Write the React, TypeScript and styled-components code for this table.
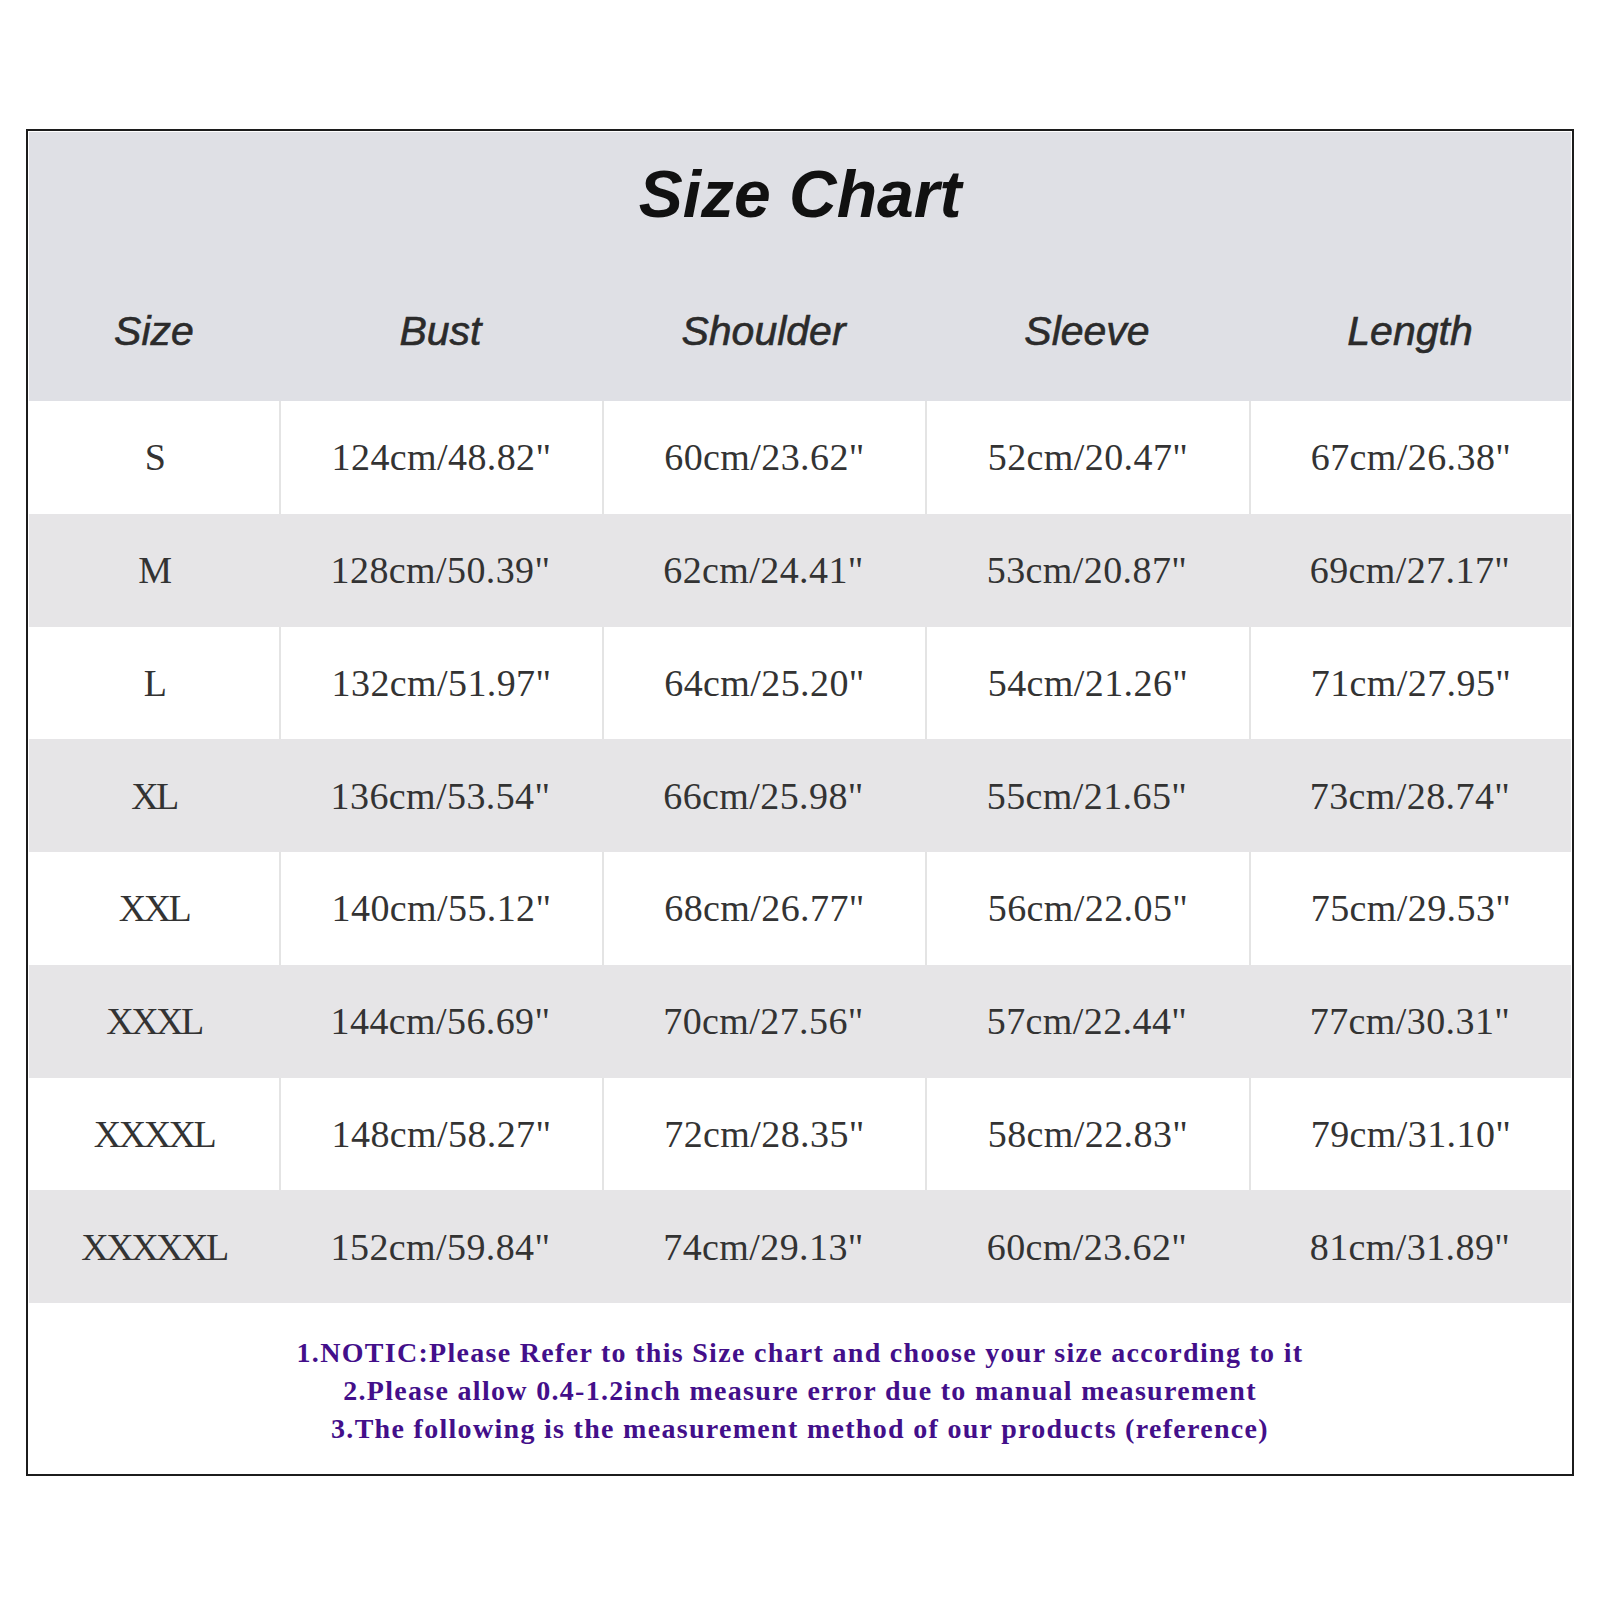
import React from "react";
import styled, { createGlobalStyle } from "styled-components";

const GlobalStyle = createGlobalStyle`
    body {
        margin: 0;
        background-color: #ffffff;
    }
`;

const Page = styled.div`
    padding: 129px 26px 124px 26px;
`;

const Quadro = styled.section`
    border: 2px solid #1c1c1c;
    padding: 1px;
    background-color: #ffffff;
`;

const Cabecalho = styled.header`
    background-color: #dfe0e5;
    height: 269px;
    display: flex;
    flex-direction: column;
`;

const Titulo = styled.h1`
    margin: 0;
    height: 124px;
    display: flex;
    align-items: center;
    justify-content: center;
    font-family: "Segoe Print", "Liberation Sans", sans-serif;
    font-style: italic;
    font-weight: 700;
    font-size: 66px;
    color: #111111;
`;

const Grade = styled.div`
    display: grid;
    grid-template-columns: 250px 323px 323px 324px 322px;
`;

const Rotulo = styled.div`
    height: 145px;
    display: flex;
    align-items: center;
    justify-content: center;
    padding-top: 6px;
    box-sizing: border-box;
    font-family: "Segoe Print", "Liberation Sans", sans-serif;
    font-style: italic;
    font-size: 41px;
    color: #2b2b2b;
    -webkit-text-stroke: 0.6px #2b2b2b;
`;

const Celula = styled.div<{ $cinza: boolean; $primeira: boolean }>`
    height: 112.75px;
    display: flex;
    align-items: center;
    justify-content: center;
    background-color: ${(p) => (p.$cinza ? "#e6e5e7" : "#ffffff")};
    border-left: ${(p) => (p.$primeira || p.$cinza ? "none" : "2px solid #e4e4e4")};
    box-sizing: border-box;
    font-family: "Liberation Serif", "Times New Roman", serif;
    font-size: 38px;
    color: #333333;
    letter-spacing: ${(p) => (p.$primeira ? "-2.5px" : "0.4px")};
`;

const Rodape = styled.footer`
    height: 170px;
    padding-top: 31px;
    box-sizing: border-box;
    text-align: center;
    font-family: "Liberation Serif", "Times New Roman", serif;
    font-weight: 700;
    font-size: 28px;
    line-height: 38px;
    letter-spacing: 1.3px;
    color: #430f8a;
`;

const Linha = styled.div``;

const colunas = ["Size", "Bust", "Shoulder", "Sleeve", "Length"];

const medidas = [
    ["S", "124cm/48.82\"", "60cm/23.62\"", "52cm/20.47\"", "67cm/26.38\""],
    ["M", "128cm/50.39\"", "62cm/24.41\"", "53cm/20.87\"", "69cm/27.17\""],
    ["L", "132cm/51.97\"", "64cm/25.20\"", "54cm/21.26\"", "71cm/27.95\""],
    ["XL", "136cm/53.54\"", "66cm/25.98\"", "55cm/21.65\"", "73cm/28.74\""],
    ["XXL", "140cm/55.12\"", "68cm/26.77\"", "56cm/22.05\"", "75cm/29.53\""],
    ["XXXL", "144cm/56.69\"", "70cm/27.56\"", "57cm/22.44\"", "77cm/30.31\""],
    ["XXXXL", "148cm/58.27\"", "72cm/28.35\"", "58cm/22.83\"", "79cm/31.10\""],
    ["XXXXXL", "152cm/59.84\"", "74cm/29.13\"", "60cm/23.62\"", "81cm/31.89\""],
];

const App = () => {
    return (
        <>
            <GlobalStyle />
            <Page>
                <Quadro>
                    <Cabecalho>
                        <Titulo>Size Chart</Titulo>
                        <Grade>
                            {colunas.map((c) => (
                                <Rotulo key={c}>{c}</Rotulo>
                            ))}
                        </Grade>
                    </Cabecalho>
                    <Grade>
                        {medidas.map((linha, i) =>
                            linha.map((valor, j) => (
                                <Celula key={i + "-" + j} $cinza={i % 2 === 1} $primeira={j === 0}>
                                    {valor}
                                </Celula>
                            ))
                        )}
                    </Grade>
                    <Rodape>
                        <Linha>1.NOTIC:Please Refer to this Size chart and choose your size according to it</Linha>
                        <Linha>2.Please allow 0.4-1.2inch measure error due to manual measurement</Linha>
                        <Linha>3.The following is the measurement method of our products (reference)</Linha>
                    </Rodape>
                </Quadro>
            </Page>
        </>
    );
};

export default App;
